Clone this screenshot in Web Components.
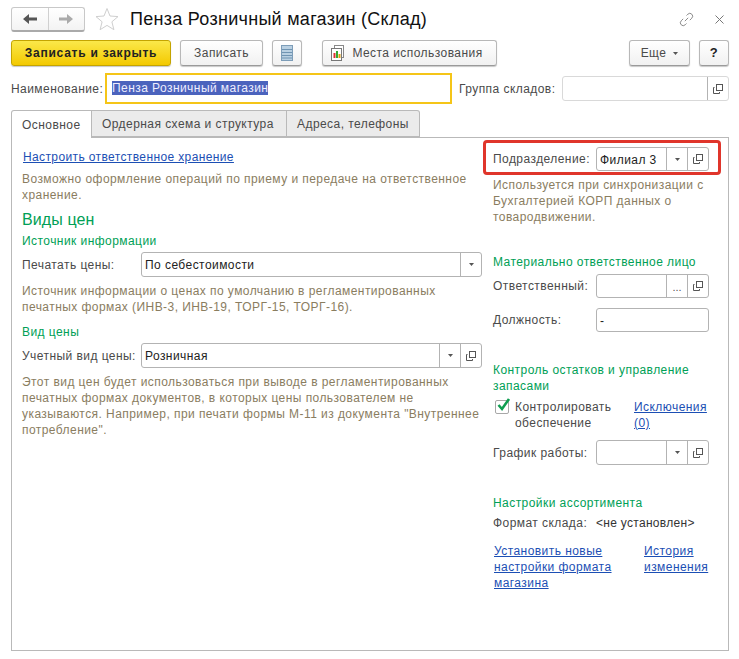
<!DOCTYPE html>
<html><head><meta charset="utf-8"><title>Склад</title>
<style>
html,body{margin:0;padding:0;background:#fff}
body{font:12px/16px "Liberation Sans",Arial,sans-serif;color:#4a4a4a;letter-spacing:.44px}
</style></head><body>
<x-form></x-form>
<script>
const OPEN='<svg width="10" height="10" viewBox="0 0 10 10" fill="none" stroke="#555"><rect x="3.5" y=".5" width="6" height="6"/><path d="M1.500 3.500H.5v6h6V8"/></svg>';
const DROP='<svg width="5" height="3" viewBox="0 0 5 3"><path d="M0 0h5L2.500 3z" fill="#555"/></svg>';
function def(name,css,html){
  customElements.define(name,class extends HTMLElement{
    constructor(){super();const s=this.attachShadow({mode:'open'});s.innerHTML='<style>'+css+'</style>'+(typeof html==='function'?html(this):html);}
  });
}
def('x-btn',`:host{display:inline-flex;align-items:center;justify-content:center;box-sizing:border-box;height:26px;border:1px solid #b8b8b8;border-bottom-color:#9a9a9a;border-radius:3px;background:linear-gradient(#fff,#f1f1f1);box-shadow:0 1px 1px #c8c8c8;color:#4a4a4a;gap:6px;white-space:nowrap}
:host([primary]){background:linear-gradient(#fbe84a,#f3c900);border-color:#c4a400;color:#222;font-weight:bold;letter-spacing:.75px}`,'<slot></slot>');
def('x-field',`:host{display:flex;box-sizing:border-box;height:25px;border:1px solid #b3b3b3;border-radius:3px;background:#fff;color:#222}
.v{flex:1;min-width:0;padding:1px 3px 0;line-height:22px;white-space:nowrap;overflow:hidden}
.b{width:20px;flex:none;border-left:1px solid #b3b3b3;display:flex;align-items:center;justify-content:center}`,
 el=>{const btns=(el.getAttribute('btns')||'').split(' ').filter(Boolean);
  return '<div class="v"><slot></slot></div>'+btns.map(b=>'<div class="b">'+(b==='d'?DROP:b==='o'?OPEN:'<span style="font-size:11px;line-height:11px;margin-top:3px;color:#555;letter-spacing:0">...</span>')+'</div>').join('')});
def('x-note',`:host{display:block;color:#8a7d5f;line-height:16px}`,'<slot></slot>');
def('x-head',`:host{display:block;color:#00a056;line-height:16px}:host([big]){font-size:16px;line-height:20px;letter-spacing:.1px}`,'<slot></slot>');
def('x-link',`:host{display:inline;color:#1c4fb4;text-decoration:underline;line-height:16px}`,'<slot></slot>');
def('x-row',`:host{display:flex;align-items:center}
.l{flex:none;width:var(--lw,103px);white-space:nowrap}
.f{flex:1;min-width:0}`,'<div class="l"><slot name="label"></slot></div><div class="f"><slot></slot></div>');
def('x-tab',`:host{display:flex;align-items:center;box-sizing:border-box;height:27px;padding:0 10px;border:1px solid #b9b9b9;border-left-width:0;background:#ebebeb;color:#4a4a4a;white-space:nowrap}
:host([first]){border-left-width:1px;border-radius:3px 0 0 0}
:host([last]){border-radius:0 3px 0 0}
:host([active]){background:#fff;height:28px;margin-bottom:-1px;border-bottom:0;z-index:1}`,'<slot></slot>');
def('x-check',`:host{display:flex;gap:6px}
.c{flex:none;box-sizing:border-box;width:14px;height:14px;border:1px solid #a8a8a8;border-radius:2px;margin:1px 0 0 2px;position:relative;background:#fff}
svg{position:absolute;left:0;top:-4px}`,'<div class="c"><svg width="16" height="15" viewBox="0 0 16 15"><path d="M2.500 8l3.500 4 7-10" fill="none" stroke="#0f9d50" stroke-width="2.6"/></svg></div><div><slot></slot></div>');
def('x-mark',`:host{display:block;box-sizing:border-box;width:238px;height:35px;margin-left:-10px;padding:4px 9px 0 7px;border:3px solid #e0352b;border-radius:4px}`,'<slot></slot>');

def('x-titlebar',`:host{display:flex;align-items:center;height:26px;margin:6px 0 0 11px}
.nav{display:flex;box-sizing:border-box;width:74px;height:25px;border:1px solid #c8c8c8;border-bottom:2px solid #aaa;border-radius:3px;background:linear-gradient(#fff,#f3f3f3)}
.nav div{flex:1;display:flex;align-items:center;justify-content:center}
.nav div+div{border-left:1px solid #d0d0d0}
.star{margin:0 11px 0 10px;display:block}
h1{margin:0;font:normal 18px/26px "Liberation Sans",Arial,sans-serif;color:#111;letter-spacing:.28px;flex:1}
.r{display:flex;align-items:center;gap:21px;margin-right:15px}`,
`<div class="nav"><div><svg width="14" height="10" viewBox="0 0 14 10"><path d="M14 3.500H6V0L0 5l6 5V6.500h8z" fill="#555"/></svg></div><div><svg width="14" height="10" viewBox="0 0 14 10"><path d="M0 3.500h8V0l6 5-6 5V6.500H0z" fill="#aaa"/></svg></div></div>
<svg class="star" width="24" height="24" viewBox="0 0 24 24"><path d="M12 1.500l3 7.500 8 .6-6.100 5.200 2 7.900L12 18.400l-6.900 4.300 2-7.900L1 9.600l8-.6z" fill="none" stroke="#cfcfcf"/></svg>
<h1><slot></slot></h1>
<div class="r"><svg width="15" height="15" viewBox="-8 -8 16 16" fill="none" stroke="#8a8a8a"><g transform="rotate(-45)"><path d="M-2-3h-3a3 3 0 0 0 0 6h2M2 3h3a3 3 0 0 0 0-6H3M-2.500 0h5"/></g></svg>
<svg width="9" height="9" viewBox="0 0 9 9" stroke="#777" style="margin-top:1px"><path d="M.5.500l8 8M8.500.500l-8 8"/></svg></div>`);

def('x-form',`:host{display:block;width:739px;height:659px;box-sizing:border-box;overflow:hidden}
.cmd{display:flex;align-items:center;margin:8px 10px 0 11px}
.name{display:flex;align-items:center;margin:7px 10px 0 11px}
.sel{background:#4b63bd;color:#eef;}
.nm{box-sizing:border-box;width:347px;height:31px;border:2px solid #f5c518;padding:0 5px;line-height:27px;color:#eef;white-space:nowrap}
.lbl{flex:none;width:94px;white-space:nowrap}
.tabs{display:flex;margin:6px 0 0 11px;position:relative}
.panel{box-sizing:border-box;width:718px;height:514px;margin-left:11px;border:1px solid #b9b9b9;display:flex;padding:11px 0 0 10px}
.left{box-sizing:border-box;width:471px;padding-right:11px;flex:none}
.right{box-sizing:border-box;width:216px;flex:none}
.sp{flex:1}`,
`<x-titlebar>Пенза Розничный магазин (Склад)</x-titlebar>
<div class="cmd">
<x-btn primary style="width:160px">Записать и закрыть</x-btn>
<x-btn style="width:83px;margin-left:9px">Записать</x-btn>
<x-btn style="width:30px;margin-left:9px"><svg width="12" height="16" viewBox="0 0 12 16"><rect x=".5" y=".5" width="11" height="15" fill="#b9d0e2" stroke="#7d9db8"/><path d="M1 4.500h10M1 7.500h10M1 10.500h10M1 13h10" stroke="#6f94b2"/></svg></x-btn>
<x-btn style="width:175px;margin-left:20px;padding-right:6px"><svg width="16" height="16" viewBox="0 0 16 16"><rect x="4.500" y=".5" width="9" height="12" fill="#fff" stroke="#888"/><rect x="1.500" y="3.500" width="10" height="12" fill="#fff" stroke="#777"/><rect x="3.500" y="8" width="2" height="5" fill="#d33"/><rect x="6" y="6" width="2" height="7" fill="#3a3"/><rect x="8.500" y="9" width="2" height="4" fill="#e3a010"/></svg>Места использования</x-btn>
<div class="sp"></div>
<x-btn style="width:61px;gap:7px">Еще <svg width="5" height="3" viewBox="0 0 5 3"><path d="M0 0h5L2.500 3z" fill="#555"/></svg></x-btn>
<x-btn style="width:30px;margin-left:9px;color:#222;font-weight:bold;font-size:13px">?</x-btn>
</div>
<div class="name">
<span class="lbl">Наименование:</span>
<div class="nm"><span class="sel">Пенза Розничный магазин</span></div>
<span style="margin-left:7px;width:103px;white-space:nowrap">Группа складов:</span>
<x-field btns="o" style="width:167px;border-color:#d9d9d9"></x-field>
</div>
<div class="tabs">
<x-tab first active style="width:81px">Основное</x-tab>
<x-tab style="width:195px">Ордерная схема и структура</x-tab>
<x-tab last style="width:133px">Адреса, телефоны</x-tab>
</div>
<div class="panel">
<div class="left">
<x-link style="margin-left:1px;letter-spacing:.38px">Настроить ответственное хранение</x-link>
<x-note style="margin-top:6px">Возможно оформление операций по приему и передаче на ответственное хранение.</x-note>
<x-head big style="margin-top:7px">Виды цен</x-head>
<x-head style="margin-top:3px">Источник информации</x-head>
<x-row style="--lw:119px;margin-top:3px"><span slot="label">Печатать цены:</span><x-field btns="d">По себестоимости</x-field></x-row>
<x-note style="margin-top:6px">Источник информации о ценах по умолчанию в регламентированных печатных формах (ИНВ-3, ИНВ-19, ТОРГ-15, ТОРГ-16).</x-note>
<x-head style="margin-top:9px">Вид цены</x-head>
<x-row style="--lw:119px;margin-top:3px"><span slot="label">Учетный вид цены:</span><x-field btns="d o">Розничная</x-field></x-row>
<x-note style="margin-top:6px">Этот вид цен будет использоваться при выводе в регламентированных печатных формах документов, в которых цены пользователем не указываются. Например, при печати формы М-11 из документа "Внутреннее потребление".</x-note>
</div>
<div class="right">
<x-mark style="margin-top:-9px"><x-row><span slot="label">Подразделение:</span><x-field btns="d o" style="height:24px">Филиал 3</x-field></x-row></x-mark>
<x-note style="margin-top:2px">Используется при синхронизации с Бухгалтерией КОРП данных о товародвижении.</x-note>
<x-head style="margin-top:29px">Материально ответственное лицо</x-head>
<x-row style="margin-top:4px"><span slot="label">Ответственный:</span><x-field btns="e o" style="height:24px"></x-field></x-row>
<x-row style="margin-top:10px"><span slot="label">Должность:</span><x-field style="height:24px">-</x-field></x-row>
<x-head style="margin-top:30px">Контроль остатков и управление запасами</x-head>
<div style="display:flex;margin-top:5px"><x-check style="width:141px">Контролировать обеспечение</x-check><div style="width:75px"><x-link>Исключения (0)</x-link></div></div>
<x-row style="margin-top:9px"><span slot="label">График работы:</span><x-field btns="d o"></x-field></x-row>
<x-head style="margin-top:30px">Настройки ассортимента</x-head>
<div style="margin-top:4px;display:flex"><span style="width:103px;white-space:nowrap">Формат склада:</span><span style="color:#333;letter-spacing:.3px">&lt;не установлен&gt;</span></div>
<div style="display:flex;margin:12px 0 0 1px"><div style="width:150px"><x-link>Установить новые настройки формата магазина</x-link></div><div style="width:65px"><x-link>История изменения</x-link></div></div>
</div>
</div>`);
</script>
</body></html>
